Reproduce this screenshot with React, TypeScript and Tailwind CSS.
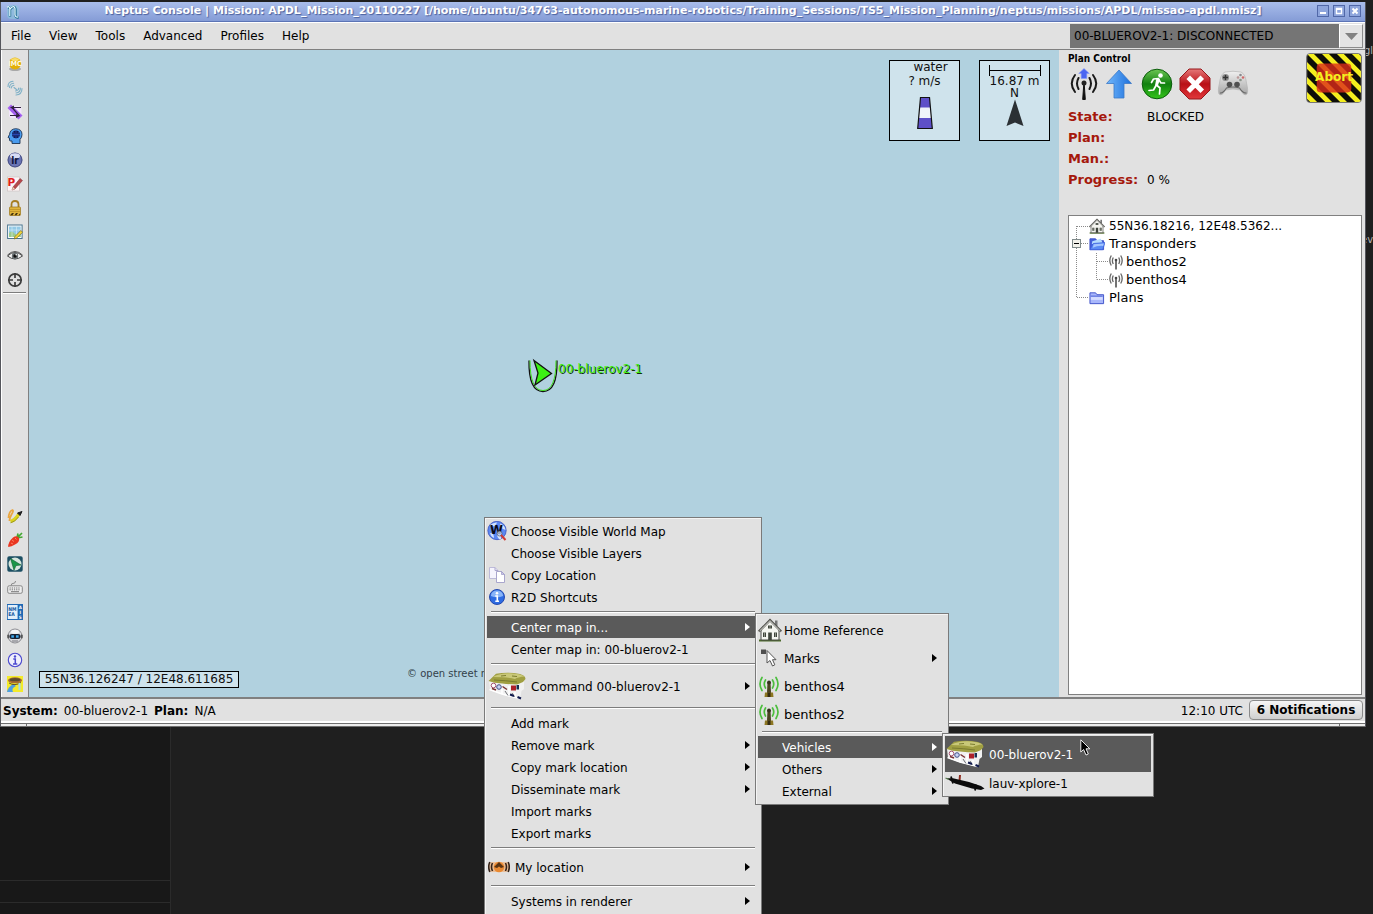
import type { ReactNode } from "react";

type IconProps = { children: ReactNode; box?: string; className?: string };

function Svg({ children, box = "0 0 16 16", className = "h-4 w-4" }: IconProps) {
  return (
    <svg viewBox={box} className={`shrink-0 ${className}`} aria-hidden="true">
      {children}
    </svg>
  );
}

/* ---------- small tool icons ---------- */

const ImcIcon = () => (
  <Svg>
    <ellipse cx="8" cy="13" rx="6" ry="2" fill="#a8a8a8" />
    <circle cx="8" cy="7.5" r="6" fill="#e3b008" />
    <ellipse cx="8" cy="3.500" rx="3.800" ry="1.600" fill="#f8dc6a" />
    <text x="8" y="10.200" textAnchor="middle" fontSize="7" fontWeight="700" fill="#fffbe6" fontFamily="DejaVu Sans Condensed, sans-serif">IMC</text>
  </Svg>
);

const WavesIcon = () => (
  <Svg>
    <g fill="none" stroke="#7fb0c6" strokeWidth="1.1" strokeLinecap="round">
      <path d="M1 6.5Q1 1.5 6 1.2M2.5 7.5Q2.6 3.6 6.6 3.2M4.2 8Q4.2 5.8 7 5.2" />
      <path d="M15 8.500Q15 14.500 9 15M13.400 8Q13.500 12.500 9 13M11.800 8Q11.700 10.500 8.500 11M7 7.500L9.500 9.500" />
    </g>
  </Svg>
);

const SwapIcon = () => (
  <Svg>
    <rect x="2" y="2" width="12.500" height="12" rx="3" fill="#f2e6fb" />
    <path d="M0.500 4L4 0.500L15.500 11.500L11.500 15.500Z" fill="#a45ff0" />
    <path d="M14 3.500H5L12 11.500H3" fill="none" stroke="#30223c" strokeWidth="1.200" />
    <path d="M3 3.500L7 1.500V5.500ZM13 12L9 10V14Z" fill="#30223c" />
  </Svg>
);

const BrainIcon = () => (
  <Svg>
    <path d="M5 15.500V13H3.500Q2.500 13 2.500 12V10L1 9.500L2.500 6.500Q3 1 8.700 0.700Q15 1 15 6.500Q15 9.500 13 11.500V15.500Z" fill="#4a9bee" stroke="#1c3352" strokeWidth="0.900" />
    <circle cx="9" cy="6.300" r="3.900" fill="#10184e" />
    <path d="M5 6.500H13M9 2.500V10.500M6.500 3.500Q8 6.500 6.500 9.500M11.500 3.500Q10 6.500 11.500 9.500" stroke="#2f55c8" strokeWidth="0.700" fill="none" />
  </Svg>
);

const LrIcon = () => (
  <Svg>
    <circle cx="8" cy="8" r="7.300" fill="#6a74b4" />
    <circle cx="8" cy="8" r="7" fill="none" stroke="#3a3f72" strokeWidth="0.800" />
    <ellipse cx="8" cy="4" rx="5" ry="2.800" fill="#d8dcf4" />
    <text x="8" y="12" textAnchor="middle" fontSize="10" fontWeight="700" fill="#11153a" fontFamily="DejaVu Sans Condensed, sans-serif">lr</text>
  </Svg>
);

const PlanEditIcon = () => (
  <Svg>
    <rect x="0.500" y="1" width="12" height="14" fill="#fdf5f5" stroke="#c9bcbc" strokeWidth="0.600" />
    <text x="0.500" y="9.500" fontSize="10.500" fontWeight="700" fill="#e02020" fontFamily="DejaVu Sans, sans-serif">P</text>
    <path d="M5 14L6 11L13 2.500L15.500 4.500L8 13Z" fill="#b8474a" stroke="#7c2f35" strokeWidth="0.500" />
    <path d="M5 14L6 11L8 13Z" fill="#f0d6c0" />
  </Svg>
);

const LockIcon = () => (
  <Svg>
    <path d="M4.500 8V4.500Q4.500 1 8 1Q11.500 1 11.500 4.500V8" fill="none" stroke="#a67d22" strokeWidth="1.800" />
    <rect x="2.500" y="7" width="11" height="8.500" rx="0.800" fill="#e0b43c" stroke="#9a7418" strokeWidth="0.700" />
    <path d="M3 9.500H13M3 11.500H13" stroke="#b98d22" strokeWidth="0.700" />
    <path d="M3 15.200L5 13H7L5.500 15.200ZM7.500 15.200L9 13H11L9.500 15.200ZM11.500 15.200L13 13.400V15.200Z" fill="#443410" />
  </Svg>
);

const MapEditIcon = () => (
  <Svg>
    <rect x="0.600" y="1" width="14.500" height="13.500" fill="#fff" stroke="#4a7590" strokeWidth="1" />
    <rect x="2" y="2.500" width="11.700" height="10.500" fill="#93c9e6" />
    <path d="M2 9Q5 6 7 9T13.700 8V13H2Z" fill="#9ccb8b" />
    <path d="M5 2.500V13M9.500 2.500V13M2 6H13.700" stroke="#d9eef8" strokeWidth="0.600" />
    <path d="M7 15L8 12.500L13.800 6.500L15.600 8.300L9.600 14.200Z" fill="#f1d43a" stroke="#6b5a1a" strokeWidth="0.600" />
  </Svg>
);

const EyeIcon = () => (
  <Svg>
    <path d="M0.500 8Q8 1 15.500 8Q8 14 0.500 8Z" fill="#f4f4f4" stroke="#4a4a4a" strokeWidth="1" />
    <path d="M0.500 7Q8 0 15.500 7" fill="none" stroke="#555" strokeWidth="1" />
    <circle cx="8" cy="8" r="3.200" fill="#6b7274" />
    <circle cx="8" cy="8" r="1.700" fill="#0d0d0d" />
    <circle cx="9.200" cy="6.800" r="0.800" fill="#fff" />
  </Svg>
);

const TargetIcon = () => (
  <Svg>
    <circle cx="8" cy="8" r="6.200" fill="none" stroke="#3d3d3d" strokeWidth="1.700" />
    <path d="M8 1V6M8 10V15M1 8H6M10 8H15" stroke="#3d3d3d" strokeWidth="1.700" />
  </Svg>
);

const BrushIcon = () => (
  <Svg>
    <path d="M1.500 10Q2 3 5.500 2Q7 2.500 4.500 6.500Q2.500 10 2.500 13" fill="none" stroke="#eaa640" strokeWidth="1.800" />
    <path d="M3.500 13.500Q7.500 12.500 12 6" fill="none" stroke="#dcd21c" strokeWidth="3.200" />
    <path d="M3.500 14.800Q8 14 11.500 9" fill="none" stroke="#95931c" strokeWidth="0.900" />
    <path d="M10.500 5L13 7.500L15 3.500Z" fill="#1e1e1e" stroke="#1e1e1e" strokeLinejoin="round" />
  </Svg>
);

const CarrotIcon = () => (
  <Svg>
    <path d="M10 6L15 1M10 6L11 1.500M10 6L15.500 5" stroke="#43a832" strokeWidth="1.700" />
    <path d="M1.200 15Q1 10 6 5.500Q10 3 12 6Q13 10 8 12.500Q4.500 14.500 1.200 15Z" fill="#ea3620" />
    <path d="M5 8L7 9.500M8 6L9.500 7.500M4 11L6 12" stroke="#fb8a66" strokeWidth="0.900" />
  </Svg>
);

const NavArrowIcon = () => (
  <Svg>
    <rect x="0.300" y="0.300" width="15.400" height="15.400" rx="1.800" fill="#1c4f63" />
    <circle cx="8" cy="8" r="6.500" fill="#d6e6dd" />
    <path d="M3.500 2.500L14 9L9 9.600L7 14.200Z" fill="#1a9646" stroke="#0f5d31" strokeWidth="0.600" />
  </Svg>
);

const KeyboardIcon = () => (
  <Svg>
    <path d="M4 6Q4 3 7 3.200Q8.500 3 8.500 1" fill="none" stroke="#8b8b8b" />
    <rect x="0.700" y="5.800" width="14.600" height="7.500" rx="1.500" fill="#efefef" stroke="#878787" />
    <path d="M2.500 8H13.500M2.500 9.800H13.500" stroke="#777" strokeWidth="1" strokeDasharray="1.300 0.900" />
    <path d="M4 11.700H12" stroke="#777" />
  </Svg>
);

const NmeaIcon = () => (
  <Svg>
    <rect width="16" height="16" fill="#2069b4" />
    <rect x="0.800" y="1" width="9.800" height="14" fill="#e3effa" />
    <g fontFamily="DejaVu Sans Condensed, sans-serif" fontWeight="700">
      <text x="1.200" y="6.500" fontSize="5" fill="#14589f">NM</text>
      <text x="1.200" y="12" fontSize="5" fill="#14589f">EA</text>
      <text x="11.700" y="5" fontSize="4.500" fill="#fff">A</text>
      <text x="12.400" y="10" fontSize="4.500" fill="#fff">I</text>
      <text x="11.700" y="15" fontSize="4.500" fill="#fff">S</text>
    </g>
  </Svg>
);

const RobotIcon = () => (
  <Svg>
    <circle cx="8" cy="8" r="7" fill="#d9d9dd" stroke="#6a6a70" strokeWidth="0.700" />
    <ellipse cx="8" cy="3.800" rx="4" ry="2" fill="#f7f7f8" />
    <rect x="0.300" y="6.500" width="2" height="4" rx="1" fill="#555" />
    <rect x="13.700" y="6.500" width="2" height="4" rx="1" fill="#555" />
    <rect x="2.500" y="6" width="11" height="5" rx="2.300" fill="#172234" />
    <rect x="4.300" y="7.300" width="2.600" height="2.400" fill="#3eaaf0" />
    <rect x="9" y="7.300" width="2.600" height="2.400" fill="#3eaaf0" />
    <path d="M5 13H11" stroke="#77777d" />
  </Svg>
);

const InfoOutlineIcon = () => (
  <Svg>
    <circle cx="8" cy="8" r="6.700" fill="#f0f0fc" stroke="#4c49cf" strokeWidth="1.100" />
    <circle cx="8" cy="4.500" r="1.200" fill="#4c49cf" />
    <path d="M6.300 7H8.300V11.800M6 11.900H10.300" fill="none" stroke="#4c49cf" strokeWidth="1.500" />
  </Svg>
);

const PoolIcon = () => (
  <Svg>
    <rect width="16" height="16" fill="#f3ea2a" />
    <path d="M0 16Q1 11 6 8L9 10Q4 12 6 16Z" fill="#4e9fe4" />
    <ellipse cx="8" cy="4.300" rx="7" ry="3" fill="#a96d33" />
    <ellipse cx="8" cy="3.700" rx="5.300" ry="1.600" fill="#5b4b31" />
    <path d="M2 7Q8 10.500 14 6.500" fill="none" stroke="#5a451c" strokeWidth="0.900" />
    <path d="M12.500 7V14" stroke="#a3d8f0" strokeWidth="2" />
  </Svg>
);

/* ---------- larger drawings ---------- */

const NeptusLogo = () => (
  <Svg className="h-4 w-4">
    <rect x="2" y="1" width="12" height="14" rx="4" fill="#8ec6dd" opacity="0.6" />
    <path d="M2.500 4Q4.500 2 5 5V12.500M5 5.500Q9.500 0.500 10.500 5V11Q10.500 14 13.500 13.500" fill="none" stroke="#1f6f92" strokeWidth="2.400" />
    <path d="M2 3.500Q4 1.500 4.800 4.500V12M5 5Q9 0.500 10 4.500V11Q10.500 13.500 13 13" fill="none" stroke="#e7f9ff" strokeWidth="1.200" />
  </Svg>
);

function AntennaIcon() {
  return (
    <Svg box="0 0 28 32" className="h-8 w-7">
      <g fill="none" stroke="#1a1a1a" strokeWidth="2" strokeLinecap="round">
        <path d="M8.500 10Q5.500 15.500 8.500 21M5 7Q-1.500 15.500 5 24M19.500 10Q22.500 15.500 19.500 21M23 7Q29.500 15.500 23 24" />
      </g>
      <path d="M14 13L15.300 31.500H12.700Z" fill="#111" stroke="#111" />
      <circle cx="14" cy="15" r="2.500" fill="#222" />
      <path d="M14 0.500L19.300 5.500H16.800V10.500H11.200V5.500H8.700Z" fill="#4a66f2" stroke="#879af8" strokeWidth="0.600" />
    </Svg>
  );
}

const UpArrowIcon = () => (
  <Svg box="0 0 28 32" className="h-8 w-7">
    <defs>
      <linearGradient id="blueUp" x1="0" x2="1">
        <stop offset="0" stopColor="#71b7fb" />
        <stop offset="1" stopColor="#1c6fdc" />
      </linearGradient>
    </defs>
    <path d="M14 2L26.500 15.500H19V30H9V15.500H1.500Z" fill="url(#blueUp)" stroke="#3b79c6" strokeWidth="0.800" strokeLinejoin="round" />
  </Svg>
);

const RunIcon = () => (
  <Svg box="0 0 32 32" className="h-8 w-8">
    <defs>
      <linearGradient id="greenRun" x1="0" y1="0" x2="0" y2="1">
        <stop offset="0" stopColor="#6cc653" />
        <stop offset="0.500" stopColor="#118010" />
        <stop offset="1" stopColor="#35c61b" />
      </linearGradient>
    </defs>
    <circle cx="16" cy="16" r="14.800" fill="url(#greenRun)" stroke="#0b5c0b" strokeWidth="1" />
    <circle cx="19.500" cy="7.500" r="2.300" fill="#fff" />
    <path d="M10.500 14.500L12.500 11L17.500 10.500L15.500 17L19 20L18.500 26M18 12L20 15H23.500M15 17.500L12.500 22L8 22.500" fill="none" stroke="#fff" strokeWidth="1.700" strokeLinejoin="round" strokeLinecap="round" />
    <path d="M15.500 10L19 11L17 17.500H14Z" fill="#fff" />
  </Svg>
);

const StopIcon = () => (
  <Svg box="0 0 32 32" className="h-8 w-8">
    <defs>
      <linearGradient id="redStop" x1="0" y1="0" x2="0" y2="1">
        <stop offset="0" stopColor="#e67878" />
        <stop offset="0.500" stopColor="#b90f16" />
        <stop offset="1" stopColor="#e1383b" />
      </linearGradient>
    </defs>
    <path d="M10 1H22L31 10V22L22 31H10L1 22V10Z" fill="url(#redStop)" stroke="#96171b" strokeLinejoin="round" />
    <path d="M11 11L21.500 21.500M21.500 11L11 21.500" stroke="#fff" strokeWidth="5" strokeLinecap="square" />
  </Svg>
);

const GamepadIcon = () => (
  <Svg box="0 0 32 32" className="h-8 w-8">
    <defs>
      <linearGradient id="pad" x1="0" y1="0" x2="0" y2="1">
        <stop offset="0" stopColor="#f0f0f0" />
        <stop offset="1" stopColor="#a5a5a5" />
      </linearGradient>
    </defs>
    <path d="M8 4Q16 2.500 24 4Q28.500 6 29.500 15Q31.500 23 30 26Q27 28.500 23.500 22Q16 20 8.500 22Q5 28.500 2 26Q0.500 23 2.500 15Q3.500 6 8 4Z" fill="url(#pad)" stroke="#b5b5b5" strokeWidth="0.700" />
    <path d="M3 25Q6 25.500 9.500 20Q16 18 22.500 20Q26 25.500 29.500 25" fill="none" stroke="#666" strokeWidth="1.100" />
    <circle cx="8.500" cy="9.500" r="3.500" fill="#8b8b8b" />
    <path d="M8.500 7V12M6 9.500H11" stroke="#333" strokeWidth="1.400" />
    <circle cx="12.500" cy="16.500" r="2.800" fill="#505050" />
    <circle cx="20" cy="16.500" r="2.800" fill="#505050" />
    <circle cx="23.500" cy="7" r="1.300" fill="#8a8a8e" />
    <circle cx="21" cy="9.500" r="1.300" fill="#b99898" />
    <circle cx="26" cy="9.500" r="1.300" fill="#cf6a6a" />
    <circle cx="23.500" cy="12" r="1.300" fill="#8b948b" />
  </Svg>
);

function HouseIcon({ className }: { className: string }) {
  return (
    <Svg box="0 0 24 24" className={className}>
      <path d="M1 21.500H23V23.500H1Z" fill="#4d6a2c" />
      <path d="M3 11.500L12 3L21 11.500V22H3Z" fill="#f5f5f0" stroke="#4b4b46" strokeWidth="1" />
      <path d="M17 2.500H19.500V8H17Z" fill="#777" />
      <path d="M0.800 13.500L12 2.200L23.200 13.500" fill="none" stroke="#4b4b46" strokeWidth="2.300" />
      <path d="M1.600 13L12 2.700L22.400 13" fill="none" stroke="#e6e6e1" strokeWidth="1" />
      <path d="M10.200 14.500H13.800V22H10.200ZM5 14.500H8V19H5ZM16 14.500H19V19H16ZM10 7.500H14V10.500H10Z" fill="#3f443b" />
      <path d="M6.500 14.500V19M17.500 14.500V19M12 7.500V10.500" stroke="#c4c8be" strokeWidth="0.600" />
    </Svg>
  );
}

function FolderIcon({ open = false }: { open?: boolean }) {
  return (
    <Svg box="0 0 17 16" className="h-4 w-4">
      <path d="M1 2.500H7L8.500 4.500H15.500V14H1Z" fill={open ? "#4460dc" : "#a9b7fb"} stroke="#3e51c9" />
      {open ? (
        <>
          <path d="M3.500 5L12.500 2.500L15 8H3Z" fill="#b5dcff" />
          <path d="M4.500 7.500L17 6.500L14.500 14H1Z" fill="#5c8cf4" stroke="#3c5fdc" strokeWidth="0.800" />
          <path d="M5 8.300L15.800 7.500L15 10Q9 9.500 4 12Z" fill="#a5c6ff" />
        </>
      ) : (
        <>
          <path d="M2 6H14.500" stroke="#4a60d4" />
          <path d="M2 7H14.500V10H2Z" fill="#d4dcff" />
        </>
      )}
    </Svg>
  );
}

const BeaconIcon = () => (
  <Svg className="h-4 w-4">
    <g fill="none" stroke="#666" strokeWidth="1.300">
      <path d="M5.300 3.500Q3.500 7 5.300 10M3.300 1.500Q0.300 6.500 3.300 11.500M10.700 3.500Q12.500 7 10.700 10M12.700 1.500Q15.700 6.500 12.700 11.500" />
    </g>
    <path d="M8 6V15.500" stroke="#444" strokeWidth="1.500" />
    <circle cx="8" cy="6" r="1.300" fill="#444" />
  </Svg>
);

const WorldIcon = () => (
  <Svg box="0 0 20 20" className="h-5 w-5">
    <circle cx="10" cy="9.500" r="9.200" fill="#5c88f2" stroke="#3048b8" strokeWidth="0.700" />
    <path d="M3 4Q7 1 10 1.500Q9 5 4.500 6ZM13 2.500Q18 4 18.500 9L14 7ZM3 12Q7 12 7 17Q4 16 3 12ZM10 14Q15 14 14 18Q11 19 10 14Z" fill="#d4e3fb" />
    <text x="9.500" y="13" textAnchor="middle" fontSize="13" fontWeight="700" fill="#0a0a14" fontFamily="DejaVu Sans Condensed, sans-serif">W</text>
    <circle cx="12.500" cy="12.500" r="2.500" fill="#dceaff" fillOpacity="0.700" stroke="#444" strokeWidth="0.600" />
    <path d="M14 14L18.500 19" stroke="#d13a32" strokeWidth="2" />
  </Svg>
);

const CopyIcon = () => (
  <Svg className="h-4 w-4">
    <path d="M0.500 0.500H6L9 3.500V11.500H0.500Z" fill="#f5f4fd" stroke="#bdbad9" />
    <path d="M6 0.500V3.500H9" fill="none" stroke="#aaa6cd" />
    <path d="M7.500 4.500H12.500L15.500 7.500V15.500H7.500Z" fill="#fff" stroke="#a9a6cc" />
    <path d="M12.500 4.500V7.500H15.500Z" fill="#cbc8ea" stroke="#9c98c4" strokeWidth="0.700" />
  </Svg>
);

const InfoIcon = () => (
  <Svg className="h-4 w-4">
    <circle cx="8" cy="8" r="7.500" fill="#2f6ce2" stroke="#1b3fa8" strokeWidth="0.900" />
    <path d="M1.800 7Q2.500 1.500 8 1.500Q13.500 1.500 14.200 7Q8 9.500 1.800 7Z" fill="#88b4f8" />
    <circle cx="8" cy="4.300" r="1.300" fill="#fff" />
    <path d="M6.300 7H8.300V12M6.300 12.200H10" fill="none" stroke="#fff" strokeWidth="1.600" />
  </Svg>
);

const RovIcon = () => (
  <Svg box="0 0 38 28" className="h-7 w-10">
    <path d="M1 9L2 18L14 22.500L32 27L33.500 19L36 17V8L20 7Z" fill="#f1f1f1" />
    <path d="M14 13V22M21 14V24M27 20V25.500M1.500 17.500L14 22L31.500 26.500" fill="none" stroke="#fff" strokeWidth="1.600" />
    <path d="M17 19L20 23.500M24 21L26.500 25" stroke="#6d6f74" strokeWidth="1" />
    <path d="M0.500 9L8 1.800Q20 -0.300 32 2Q37.500 3.500 37.500 7L35 10Q31 11.500 29 12.500Q22 12.500 14 11.500Q6 11 0.500 9Z" fill="#a09f42" />
    <path d="M5 5Q12 1 22 1.300Q32 1.800 36.500 4.500Q30 5 27 7Q20 5 5 5Z" fill="#c9c878" />
    <path d="M6 8Q18 8.500 29 10M13 4L18 3.500M24 4L29 4.500" fill="none" stroke="#7b7c30" strokeWidth="1" />
    <circle cx="5.500" cy="13.500" r="2.300" fill="#fff" stroke="#a75574" />
    <circle cx="11" cy="15" r="2.300" fill="#c9d3f4" stroke="#415087" />
    <path d="M14.500 14.500L19 17.500M4 16.500L8 18" stroke="#783030" strokeWidth="1.500" />
    <path d="M23 13.500H28V18.500H23Z" fill="#ad2129" />
    <path d="M28.500 13H31V17.500H28.500Z" fill="#183052" />
    <path d="M22 22.500L26 24M29.500 25L33 26.500" stroke="#101a4d" strokeWidth="2" />
  </Svg>
);

const AuvIcon = () => (
  <Svg box="0 0 40 18" className="h-[18px] w-10">
    <path d="M14 1L16 1L15.500 7H13.500Z" fill="#8f2d20" />
    <path d="M1 4.200L8 4.200L24 8L36 12L39.500 14.500L36 16L27 14.500L10 9.500Z" fill="#0b0b0b" />
    <path d="M6 2.500L8 9.500M31 10.500L30 16.500" stroke="#0b0b0b" strokeWidth="1.800" />
    <path d="M0.500 4L4 5.500" stroke="#557a4d" strokeWidth="1.300" />
  </Svg>
);

const MyLocationIcon = () => (
  <Svg box="0 0 22 16" className="h-4 w-[22px]">
    <rect x="0.500" y="3" width="21" height="10" rx="4" fill="#f1a868" opacity="0.6" />
    <circle cx="11" cy="8" r="5.300" fill="#e98932" />
    <path d="M6 8L11 3L16 8L13 9L11 7.500L9 9Z" fill="#5a3413" />
    <path d="M4.500 4Q2.500 8 4.500 12M1.800 3Q-0.300 8 1.800 13M17.500 4Q19.500 8 17.500 12M20.200 3Q22.300 8 20.200 13" fill="none" stroke="#33231a" strokeWidth="1.600" />
  </Svg>
);

const MarkPointerIcon = () => (
  <Svg box="0 0 24 24" className="h-6 w-6">
    <rect x="3" y="3.500" width="5" height="4.500" fill="#4f4f4f" />
    <path d="M9 4.500V17L12 14.500L14.500 20L16.800 18.800L14.500 13.700H18Z" fill="#fff" stroke="#555" strokeWidth="1" strokeLinejoin="round" />
  </Svg>
);

const GreenBeaconIcon = () => (
  <Svg box="0 0 24 24" className="h-6 w-6">
    <g fill="none" stroke="#4cbd3e" strokeWidth="1.700" strokeLinecap="round">
      <path d="M7.500 6Q5 10 7.500 14M4 3.500Q0 10 4 16.500M14.500 6Q17 10 14.500 14M18 3.500Q22 10 18 16.500" />
    </g>
    <path d="M9.500 8H12.500L13 19H9Z" fill="#4a4322" />
    <circle cx="11" cy="8.500" r="1.900" fill="#34301d" />
    <path d="M7 18.500H15L15.500 23H6.500Z" fill="#8d7722" />
    <path d="M9.500 18.500H12.500V23H9.500Z" fill="#342c12" />
  </Svg>
);

/* ---------- menus ---------- */

function Arrow() {
  return (
    <svg viewBox="0 0 5 8" className="ml-auto h-2 w-[5px] shrink-0" aria-hidden="true">
      <path d="M0 0L5 4L0 8Z" fill="currentColor" />
    </svg>
  );
}

type ItemProps = {
  label: string;
  icon?: ReactNode;
  height?: string;
  pad?: string;
  arrow?: boolean;
  active?: boolean;
};

function Item({ label, icon, height = "h-[22px]", pad = "pl-6 pr-[9px]", arrow, active }: ItemProps) {
  return (
    <button
      type="button"
      role="menuitem"
      className={`flex w-full shrink-0 items-center whitespace-nowrap text-left ${height} ${pad} ${
        active ? "bg-[#5a5a5a] text-white" : "text-black"
      }`}
    >
      {icon}
      <span className="pt-[2px]">{label}</span>
      {arrow && <Arrow />}
    </button>
  );
}

function Separator() {
  return (
    <div role="separator" className="h-2 shrink-0 px-1 pt-[3px]">
      <div className="h-[2px] border-t border-[#7d7d7d] bg-white" />
    </div>
  );
}

const panel = "absolute flex flex-col border border-[#7a7a7a] bg-[#e1e1e1] p-[2px] shadow-[inset_1px_1px_0_#f4f4f4]";
const iconCell = "flex w-6 shrink-0 items-center";

function ContextMenu() {
  return (
    <div role="menu" aria-label="Map" className={`${panel} bottom-0 left-[484px] top-[517px] w-[278px] border-b-0`}>
      <Item label="Choose Visible World Map" pad="" icon={<span className={iconCell}><WorldIcon /></span>} />
      <Item label="Choose Visible Layers" />
      <Item label="Copy Location" pad="" icon={<span className={`${iconCell} pl-[2px]`}><CopyIcon /></span>} />
      <Item label="R2D Shortcuts" pad="" icon={<span className={`${iconCell} pl-[2px]`}><InfoIcon /></span>} />
      <Separator />
      <Item label="Center map in..." arrow active />
      <Item label="Center map in: 00-bluerov2-1" />
      <Separator />
      <Item label="Command 00-bluerov2-1" height="h-9" pad="pr-[9px] gap-1" icon={<RovIcon />} arrow />
      <Separator />
      <Item label="Add mark" />
      <Item label="Remove mark" arrow />
      <Item label="Copy mark location" arrow />
      <Item label="Disseminate mark" arrow />
      <Item label="Import marks" />
      <Item label="Export marks" />
      <Separator />
      <Item label="My location" height="h-[30px]" pad="pl-px pr-[9px] gap-[5px]" icon={<MyLocationIcon />} arrow />
      <Separator />
      <Item label="Systems in renderer" arrow />
    </div>
  );
}

function CenterMenu() {
  const pad = "pr-[9px] gap-[2px]";
  return (
    <div role="menu" aria-label="Center map in" className={`${panel} left-[755px] top-[613px] w-[194px]`}>
      <Item label="Home Reference" height="h-7" pad={pad} icon={<HouseIcon className="h-6 w-6" />} />
      <Item label="Marks" height="h-7" pad={pad} icon={<MarkPointerIcon />} arrow />
      <Item label="benthos4" height="h-7 text-[13px]" pad={pad} icon={<GreenBeaconIcon />} />
      <Item label="benthos2" height="h-7 text-[13px]" pad={pad} icon={<GreenBeaconIcon />} />
      <Separator />
      <Item label="Vehicles" arrow active />
      <Item label="Others" arrow />
      <Item label="External" arrow />
    </div>
  );
}

function VehicleMenu() {
  return (
    <div role="menu" aria-label="Vehicles" className={`${panel} left-[942px] top-[733px] w-[212px]`}>
      <Item label="00-bluerov2-1" height="h-9" pad="gap-1" icon={<RovIcon />} active />
      <Item label="lauv-xplore-1" pad="gap-1" icon={<AuvIcon />} />
    </div>
  );
}

/* ---------- window parts ---------- */

function TitleBar() {
  const button = "flex h-3 w-3 items-center justify-center border border-[#5168a8] bg-[#8ea5dc] text-white";
  return (
    <header className="flex h-5 shrink-0 items-center border-b border-[#5c74b5] bg-linear-to-b from-[#a9bdeb] to-[#859cd6] pl-1 pr-1">
      <NeptusLogo />
      <h1 className="min-w-0 flex-1 overflow-hidden whitespace-nowrap pb-[2px] pl-7 text-center text-[11px] font-bold text-white [text-shadow:1px_1px_1px_#4a5f9c]">
        Neptus Console | Mission: APDL_Mission_20110227 [/home/ubuntu/34763-autonomous-marine-robotics/Training_Sessions/TS5_Mission_Planning/neptus/missions/APDL/missao-apdl.nmisz]
      </h1>
      <div className="flex gap-1 pb-[2px]">
        <button type="button" aria-label="Minimize" className={button}>
          <svg viewBox="0 0 8 8" className="h-2 w-2"><path d="M1 6H7" stroke="#fff" strokeWidth="2" /></svg>
        </button>
        <button type="button" aria-label="Maximize" className={button}>
          <svg viewBox="0 0 8 8" className="h-2 w-2"><path d="M1.500 1.500H6.500V6.500H1.500ZM1 2.200H7" fill="none" stroke="#fff" strokeWidth="1.400" /></svg>
        </button>
        <button type="button" aria-label="Close" className={button}>
          <svg viewBox="0 0 8 8" className="h-2 w-2"><path d="M1.500 1.500L6.500 6.500M6.500 1.500L1.500 6.500" stroke="#fff" strokeWidth="2" /></svg>
        </button>
      </div>
    </header>
  );
}

const menuNames = ["File", "View", "Tools", "Advanced", "Profiles", "Help"];

function MenuBar() {
  return (
    <nav className="flex h-7 shrink-0 items-center border-b border-[#808080] border-t border-t-white pl-[10px] pr-[2px]">
      <div className="flex flex-1 gap-[18px]">
        {menuNames.map((name) => (
          <button type="button" key={name}>{name}</button>
        ))}
      </div>
      <div className="relative h-6 w-[293px]">
        <select aria-label="Main system" className="h-6 w-full appearance-none bg-[#757575] pl-1 text-black" defaultValue="rov">
          <option value="rov">00-BLUEROV2-1: DISCONNECTED</option>
        </select>
        <span className="pointer-events-none absolute right-0 top-0 flex h-6 w-6 items-center justify-center border border-[#8c8c8c] border-l-white border-t-white bg-[#e4e4e4]">
          <svg viewBox="0 0 13 7" className="h-[7px] w-[13px]"><path d="M0 0H13L6.500 7Z" fill="#828282" /></svg>
        </span>
      </div>
    </nav>
  );
}

const topTools: [string, () => ReactNode][] = [
  ["IMC", ImcIcon], ["Acoustic", WavesIcon], ["Swap", SwapIcon], ["Brain", BrainIcon], ["Logs", LrIcon],
  ["Plan editor", PlanEditIcon], ["Lock", LockIcon], ["Map editor", MapEditIcon], ["Visibility", EyeIcon], ["Center", TargetIcon],
];
const bottomTools: [string, () => ReactNode][] = [
  ["Draw", BrushIcon], ["Follow", CarrotIcon], ["Navigate", NavArrowIcon], ["Keyboard", KeyboardIcon],
  ["NMEA", NmeaIcon], ["Robot", RobotIcon], ["Information", InfoOutlineIcon], ["Pool", PoolIcon],
];

function ToolStrip() {
  const row = ([name, Icon]: [string, () => ReactNode]) => (
    <button type="button" key={name} aria-label={name} className="flex h-6 items-center justify-center">
      <Icon />
    </button>
  );
  return (
    <aside className="flex w-7 shrink-0 flex-col border-l border-r border-l-white border-r-[#808080] pb-px pr-px pt-[2px]">
      {topTools.map(row)}
      <div className="mx-px h-[2px] border-t border-[#7d7d7d] bg-white" />
      <div className="mt-auto flex flex-col">{bottomTools.map(row)}</div>
    </aside>
  );
}

function MapView() {
  const box = "flex h-[81px] w-[71px] flex-col items-center border border-black bg-[#cfe3ec] text-[#111] leading-[14px]";
  return (
    <main className="relative min-w-0 flex-1 overflow-hidden bg-[#b1d1df]">
      <div className="absolute right-[9px] top-[10px] flex gap-[19px]">
        <div className={box}>
          <span className="-mt-px pl-3">water</span>
          <span>? m/s</span>
          <svg viewBox="0 0 16 32" className="mt-[9px] h-8 w-4">
            <path d="M3.500 0.500H12.500L15.300 31.500H0.700Z" fill="#5e50c8" />
            <path d="M2.600 10.500H13.400L14.300 21H1.700Z" fill="#f0f4fa" />
            <path d="M3.500 0.500H12.500L15.300 31.500H0.700Z" fill="none" stroke="#111" strokeWidth="1.200" />
          </svg>
        </div>
        <div className={box}>
          <svg viewBox="0 0 52 12" className="mt-1 h-3 w-[52px] shrink-0"><path d="M0.500 0V11M51.500 0V11M0 5.500H52" stroke="#000" fill="none" /></svg>
          <span className="-mt-[3px]">16.87 m</span>
          <span className="leading-[11px]">N</span>
          <svg viewBox="0 0 18 28" className="h-7 w-[18px]"><path d="M9 0.500L17.500 27L9 23.500L0.500 27Z" fill="#2b3034" /></svg>
        </div>
      </div>

      <div className="absolute left-[498px] top-[308px] flex">
        <svg viewBox="0 0 32 36" className="h-9 w-8">
          <path d="M2 2.500Q1.500 33.500 16 33.500Q30.500 33.500 30 2.500" fill="none" stroke="#111" strokeWidth="1.300" />
          <path d="M3 2.500Q3 32.500 16 32.500Q29 32.500 29 2.500" fill="none" stroke="#3fe01c" strokeWidth="1" />
          <path d="M7 2.500L24.500 15.500L8 27L11 15Z" fill="#3cf014" stroke="#111" strokeWidth="1.300" />
        </svg>
        <span className="-ml-px whitespace-nowrap pt-[2px] leading-[18px] text-[#3fef14] [text-shadow:1px_1px_0_#10300a]">00-bluerov2-1</span>
      </div>

      <div className="absolute bottom-[9px] left-[10px] w-[200px] border border-black bg-[#cfe3ec] text-center leading-[15px] text-[#111]">
        55N36.126247 / 12E48.611685
      </div>
      <p className="absolute bottom-4 left-[378px] whitespace-nowrap text-[10px] leading-[14px] text-[#33414a]">© open street map</p>
    </main>
  );
}

function Hazard() {
  return (
    <svg viewBox="0 0 56 50" className="absolute inset-0 h-full w-full" aria-hidden="true">
      <defs>
        <pattern id="hazard" width="11" height="11" patternUnits="userSpaceOnUse" patternTransform="rotate(-45)">
          <rect width="11" height="11" fill="#0d0d08" />
          <rect width="5" height="11" fill="#f4ee1e" />
        </pattern>
      </defs>
      <rect width="56" height="50" fill="url(#hazard)" />
      <rect x="10" y="10" width="36" height="30" rx="4" fill="#dc2a1a" opacity="0.8" />
    </svg>
  );
}

const facts: [string, string][] = [["State:", "BLOCKED"], ["Plan:", ""], ["Man.:", ""], ["Progress:", "0 %"]];

function PlanTree() {
  const row = "relative flex h-[18px] items-center whitespace-nowrap";
  return (
    <div className="relative min-h-0 flex-1 overflow-hidden border border-[#808080] bg-white">
      <svg className="pointer-events-none absolute left-0 top-0 h-24 w-12" viewBox="0 0 48 96" aria-hidden="true">
        <path d="M7.500 10V81.500M8 10.500H20M8 27.500H20M8 81.500H20M27.500 37V63.500M28 45.500H40M28 63.500H40" fill="none" stroke="#8a8a8a" strokeDasharray="1 1" />
        <rect x="3.500" y="23.500" width="8" height="8" fill="#f1f1ea" stroke="#7f8a8a" />
        <path d="M5 27.500H10" stroke="#000" />
      </svg>
      <ul className="pt-px text-[13px]">
        <li className={`${row} gap-1 pl-5`}><HouseIcon className="h-4 w-4" /><span className="text-[12px]">55N36.18216, 12E48.5362...</span></li>
        <li>
          <div className={`${row} gap-1 pl-5`}><FolderIcon open />Transponders</div>
          <ul>
            <li className={`${row} gap-[2px] pl-[39px]`}><BeaconIcon />benthos2</li>
            <li className={`${row} gap-[2px] pl-[39px]`}><BeaconIcon />benthos4</li>
          </ul>
        </li>
        <li className={`${row} gap-1 pl-5`}><FolderIcon />Plans</li>
      </ul>
    </div>
  );
}

function PlanControl() {
  return (
    <section className="flex w-[306px] shrink-0 flex-col pb-[2px] pl-[9px] pr-[3px]">
      <div className="flex justify-between pt-[3px]">
        <div>
          <h2 className="text-[10px] font-bold leading-[12px] [font-family:'DejaVu_Sans_Condensed','DejaVu_Sans',sans-serif]">Plan Control</h2>
          <div className="flex items-center pl-[2px] pt-[3px]">
            <button type="button" aria-label="Send plan"><AntennaIcon /></button>
            <button type="button" aria-label="Upload" className="ml-[7px]"><UpArrowIcon /></button>
            <button type="button" aria-label="Start plan" className="ml-2"><RunIcon /></button>
            <button type="button" aria-label="Stop plan" className="ml-[6px]"><StopIcon /></button>
            <button type="button" aria-label="Teleoperation" className="ml-[6px]"><GamepadIcon /></button>
          </div>
        </div>
        <button type="button" className="relative h-[50px] w-14 overflow-hidden rounded border border-[#777]">
          <Hazard />
          <span className="relative block pb-[2px] text-[12px] font-bold text-[#f4f01e]">Abort</span>
        </button>
      </div>
      <dl className="grid auto-rows-[21px] grid-cols-[79px_1fr] pb-[25px] pt-[3px] leading-[21px]">
        {facts.map(([name, value]) => (
          <div key={name} className="contents">
            <dt className="text-[13px] font-bold text-[#a5180c]">{name}</dt>
            <dd className="leading-[22px]">{value}</dd>
          </div>
        ))}
      </dl>
      <PlanTree />
    </section>
  );
}

function StatusBar() {
  return (
    <footer className="shrink-0">
      <div className="flex h-[26px] items-center border-b-2 border-t-2 border-b-white border-t-[#808080] px-[2px]">
        <p className="flex flex-1 gap-[6px] pt-[2px]">
          <b>System:</b><span>00-bluerov2-1</span><b>Plan:</b><span>N/A</span>
        </p>
        <span className="pr-[6px] pt-[2px]">12:10 UTC</span>
        <button type="button" className="h-5 w-[114px] rounded-sm border border-[#8a8a8a] bg-linear-to-b from-[#f6f6f6] to-[#cfcfcf] font-bold leading-none">6 Notifications</button>
      </div>
      <div className="flex h-1 justify-between border-b border-t border-[#6f6f6f] bg-[#ececec] px-[25px]">
        <i className="w-px bg-[#6f6f6f]" />
        <i className="w-px bg-[#6f6f6f]" />
      </div>
    </footer>
  );
}

export default function App() {
  return (
    <div className="relative flex h-screen flex-col overflow-hidden bg-[#1f1f1f] text-[12px] leading-[18px] text-black [font-family:'DejaVu_Sans',sans-serif]">
      <div className="flex min-h-0 flex-1 pt-[2px]">
        <div className="flex min-w-0 flex-1 flex-col border-l border-r border-[#55565c] bg-[#e1e1e1]">
          <TitleBar />
          <MenuBar />
          <div className="flex min-h-0 flex-1">
            <ToolStrip />
            <MapView />
            <PlanControl />
          </div>
          <StatusBar />
        </div>
        <div className="flex w-[7px] shrink-0 flex-col items-end gap-[171px] overflow-hidden pt-10 text-[11px] text-[#b5b5b5] [font-family:'DejaVu_Sans_Condensed','DejaVu_Sans',sans-serif]">
          <span>gl</span>
          <span>ev</span>
        </div>
      </div>
      <div className="h-[187px] shrink-0">
        <div className="flex h-full w-[171px] flex-col justify-end border-r border-[#2b2b2b] bg-[#181818]">
          <div className="h-[23px] border-b border-t border-[#2b2b2b]" />
          <div className="h-[11px]" />
        </div>
      </div>

      <ContextMenu />
      <CenterMenu />
      <VehicleMenu />

      <svg viewBox="0 0 12 18" className="pointer-events-none absolute left-[1080px] top-[739px] h-[18px] w-3" aria-hidden="true">
        <path d="M0.800 0.800V13L3.600 10.500L6 16L8.300 15L6 9.800H9.800Z" fill="#000" stroke="#fff" strokeWidth="0.900" />
      </svg>
    </div>
  );
}
